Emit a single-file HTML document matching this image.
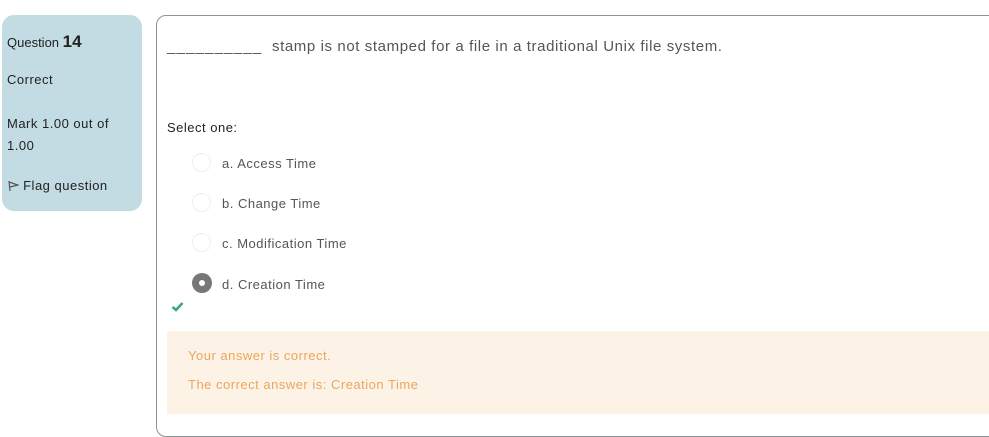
<!DOCTYPE html>
<html><head><style>
body{margin:0;width:989px;height:436px;background:#fff;font-family:"Liberation Sans",sans-serif;position:relative;overflow:hidden;letter-spacing:.5px}
.info{position:absolute;left:2px;top:15px;width:140px;height:196px;background:#c3dce3;border-radius:12px;color:#222;font-size:13px}
.info div{position:absolute;left:5px;white-space:nowrap}
.q{position:absolute;left:156px;top:15px;width:860px;height:420px;border:1px solid #8a9597;border-radius:10px}
.t{position:absolute;color:#555;white-space:nowrap}
.r{position:absolute;width:19px;height:19px;border-radius:50%;border:1px solid #eee;box-sizing:border-box}
</style></head><body>
<div class="info">
<div style="top:17px;letter-spacing:0">Question <b style="font-size:17px">14</b></div>
<div style="top:57px">Correct</div>
<div style="top:98px;line-height:22px">Mark 1.00 out of<br>1.00</div>
<div style="top:163px"><svg width="12" height="12" viewBox="0 0 12 12" style="vertical-align:-2px"><path d="M2 1 L3 11 M2 2 L11 5 L3 7" stroke="#555" fill="none" stroke-width="1.2"/></svg> Flag question</div>
</div>
<div class="q"></div>
<div class="t" style="left:167px;top:38px;font-size:15px;color:#555;letter-spacing:.6px"><span style="letter-spacing:1.2px">__________</span> &nbsp;stamp is not stamped for a file in a traditional Unix file system.</div>
<div class="t" style="left:167px;top:120px;font-size:13px;color:#222">Select one:</div>
<div class="r" style="left:192px;top:153px"></div><div class="t" style="left:222px;top:156px;font-size:13px">a. Access Time</div>
<div class="r" style="left:192px;top:193px"></div><div class="t" style="left:222px;top:196px;font-size:13px">b. Change Time</div>
<div class="r" style="left:192px;top:233px"></div><div class="t" style="left:222px;top:236px;font-size:13px">c. Modification Time</div>
<div style="position:absolute;left:192px;top:273px;width:20px;height:20px;border-radius:50%;background:#777"><div style="position:absolute;left:7px;top:7px;width:6px;height:6px;border-radius:50%;background:#fff"></div></div>
<div class="t" style="left:222px;top:277px;font-size:13px">d. Creation Time</div>
<svg style="position:absolute;left:171px;top:301px" width="13" height="11" viewBox="0 0 13 11"><path d="M1.5 6 L5 9 L11.5 2" stroke="#3aa874" stroke-width="2.6" fill="none"/></svg>
<div style="position:absolute;left:167px;top:331px;width:822px;height:83px;background:#fdf2e6"></div>
<div class="t" style="left:188px;top:348px;font-size:13px;color:#eba65f">Your answer is correct.</div>
<div class="t" style="left:188px;top:377px;font-size:13px;color:#eba65f">The correct answer is: Creation Time</div>
</body></html>
